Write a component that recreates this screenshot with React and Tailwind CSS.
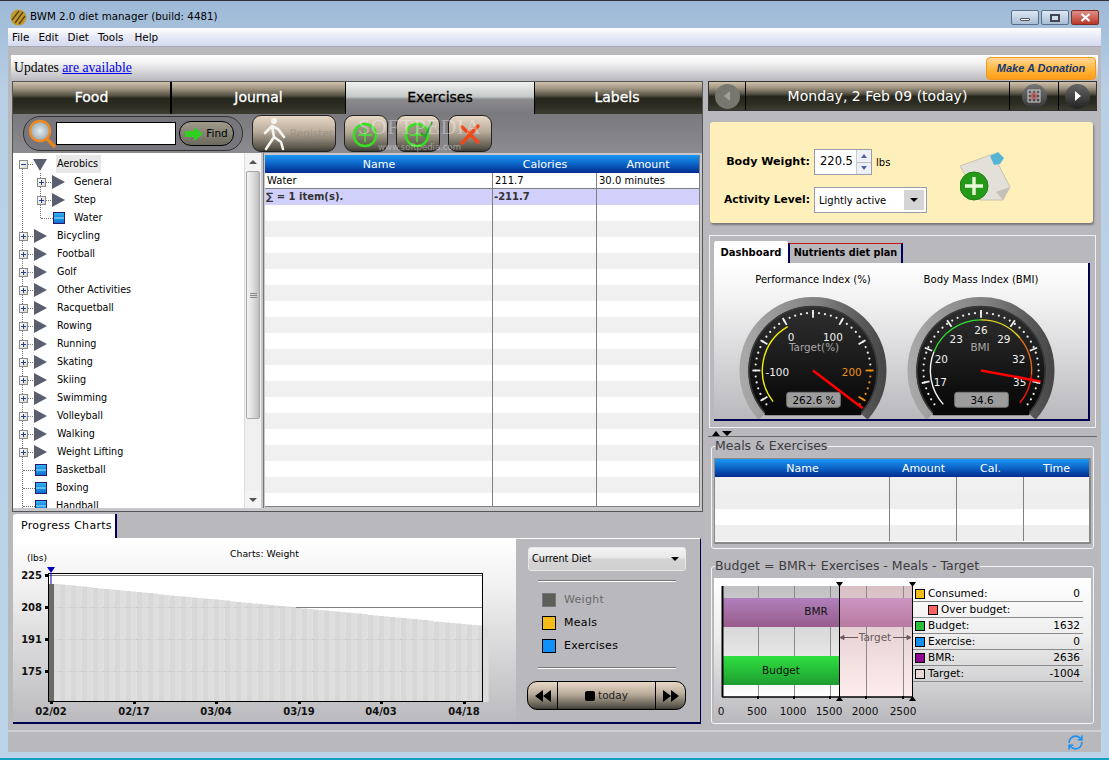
import React from 'react';
import { RefreshCw } from 'lucide-react';

const glossBar = 'bg-[linear-gradient(180deg,#d0c2ac_0%,#a89c88_18%,#5f5a4c_40%,#25261c_52%,#2c2c22_75%,#3e3d32_100%)]';
const blueHead = 'bg-[linear-gradient(180deg,#1a96f0_0%,#0f6fd0_40%,#002a90_100%)]';
const tanBtn = 'bg-[linear-gradient(180deg,#e8d8c6_0%,#b8ab9a_45%,#5a574c_90%,#3e3c32_100%)]';

const TREE = [
  { label: 'Aerobics', kind: 'open' },
  { label: 'General', kind: 'childGroup' },
  { label: 'Step', kind: 'childGroup' },
  { label: 'Water', kind: 'childLeaf' },
  ...['Bicycling', 'Football', 'Golf', 'Other Activities', 'Racquetball', 'Rowing', 'Running', 'Skating', 'Skiing', 'Swimming', 'Volleyball', 'Walking', 'Weight Lifting'].map((label) => ({ label, kind: 'group' })),
  ...['Basketball', 'Boxing', 'Handball'].map((label) => ({ label, kind: 'leaf' })),
];

const Triangle = ({ down }) => (
  <svg width="14" height="14" viewBox="0 0 14 14" className="shrink-0">
    <polygon points={down ? '0,2 14,2 7,14' : '1,0 14,7 1,14'} fill="#5a5e6e" />
  </svg>
);

const PlusBox = ({ minus, className }) => (
  <span className={`relative block w-[9px] h-[9px] shrink-0 border border-[#8a8a8a] bg-[linear-gradient(135deg,#ffffff,#d8d8d0)] ${className}`}>
    <span className="absolute left-[1px] top-[3px] w-[5px] h-[1px] bg-[#23408c]" />
    {!minus && <span className="absolute left-[3px] top-[1px] w-[1px] h-[5px] bg-[#23408c]" />}
  </span>
);

const Dots = ({ className }) => <span className={`block shrink-0 border-t border-dotted border-[#777] ${className}`} />;

const LeafIcon = () => (
  <span className="block w-[12px] h-[12px] shrink-0 border border-[#2a1670] bg-[linear-gradient(180deg,#35b8f0_0%,#1a8fe0_40%,#a8e8fa_50%,#1a8fe0_60%,#1070d0_100%)]" />
);

const TreeRow = ({ label, kind }) => (
  <div className="h-[18px] flex items-center whitespace-nowrap">
    {kind === 'open' && (
      <>
        <PlusBox minus className="ml-[5px]" />
        <Dots className="w-[5px]" />
        <Triangle down />
        <span className="ml-[9px] px-[1px] h-[18px] w-[45px] leading-[18px] bg-[#e8e8e8]">{label}</span>
      </>
    )}
    {kind === 'group' && (
      <>
        <PlusBox className="ml-[5px]" />
        <Dots className="w-[5px]" />
        <Triangle />
        <span className="ml-[10px]">{label}</span>
      </>
    )}
    {kind === 'childGroup' && (
      <>
        <PlusBox className="ml-[23px]" />
        <Dots className="w-[5px]" />
        <Triangle />
        <span className="ml-[9px]">{label}</span>
      </>
    )}
    {kind === 'childLeaf' && (
      <>
        <Dots className="ml-[27px] w-[12px]" />
        <LeafIcon />
        <span className="ml-[9px]">{label}</span>
      </>
    )}
    {kind === 'leaf' && (
      <>
        <Dots className="ml-[9px] w-[12px]" />
        <LeafIcon />
        <span className="ml-[9px]">{label}</span>
      </>
    )}
  </div>
);

const Scrollbar = () => (
  <div className="w-[17px] shrink-0 flex flex-col bg-[#f0f0f0] border-l border-[#ddd]">
    <div className="h-[18px] flex items-center justify-center bg-[#f4f4f4]">
      <span className="w-0 h-0 border-x-[4px] border-x-transparent border-b-[4px] border-b-[#555]" />
    </div>
    <div className="h-[248px] mx-[1px] border border-[#a8a8a8] rounded-[2px] bg-[linear-gradient(90deg,#f4f4f4,#d8d8d8_60%,#bdbdbd)] flex flex-col items-center justify-center gap-[1px]">
      <span className="w-[7px] h-[1px] bg-[#888]" />
      <span className="w-[7px] h-[1px] bg-[#888]" />
      <span className="w-[7px] h-[1px] bg-[#888]" />
    </div>
    <div className="flex-1" />
    <div className="h-[17px] flex items-center justify-center bg-[#f4f4f4]">
      <span className="w-0 h-0 border-x-[4px] border-x-transparent border-t-[4px] border-t-[#555]" />
    </div>
  </div>
);

const GreenPlus = ({ check }) => (
  <svg width="30" height="30" viewBox="0 0 30 30">
    <circle cx="14" cy="16" r="11" fill="#4d5a3c" fillOpacity="0.35" stroke="#35e020" strokeWidth="2.4" />
    <path d="M14 9v14M7 16h14" stroke="#45e830" strokeWidth="1.4" />
    {check && <path d="M18 14l4 4 7-15" fill="none" stroke="#2fa030" strokeWidth="2" />}
  </svg>
);

const Runner = () => (
  <svg width="26" height="34" viewBox="0 0 26 34">
    <circle cx="13" cy="4" r="3" fill="#f4f4f0" />
    <path d="M11 9L4 16M11 9l6 3 6 8M11 9l2 11-8 12M13 20l7 5 2 7" fill="none" stroke="#f4f4f0" strokeWidth="2.6" strokeLinecap="round" strokeLinejoin="round" />
  </svg>
);

const ToolButton = ({ children, className }) => (
  <div className={`h-[37px] rounded-[9px] border border-[#222] flex items-center justify-center ${tanBtn} ${className}`}>
    {children}
  </div>
);

const Gauge = ({ id, cx = 80, cy = 75, config }) => {
  const pt = (r, deg) => {
    const a = (deg * Math.PI) / 180;
    return [cx + r * Math.cos(a), cy - r * Math.sin(a)];
  };
  const arc = (r, from, to) => {
    const [x1, y1] = pt(r, from);
    const [x2, y2] = pt(r, to);
    return `M${x1} ${y1}A${r} ${r} 0 ${from - to > 180 ? 1 : 0} 1 ${x2} ${y2}`;
  };
  const dots = [];
  for (let d = 216; d >= -36; d -= 6) dots.push(d);
  const [nx, ny] = [cx + config.needle[0], cy + config.needle[1]];
  return (
    <svg width="160" height="124" viewBox="0 0 160 124" className="block">
      <defs>
        <linearGradient id={`${id}-ring`} x1="0" y1="0" x2="1" y2="0">
          <stop offset="0" stopColor="#a8a8a8" />
          <stop offset="0.55" stopColor="#808080" />
          <stop offset="1" stopColor="#484848" />
        </linearGradient>
        <linearGradient id={`${id}-face`} x1="0" y1="0" x2="0" y2="1">
          <stop offset="0" stopColor="#303030" />
          <stop offset="0.7" stopColor="#0c0c0c" />
          <stop offset="1" stopColor="#000" />
        </linearGradient>
        <clipPath id={`${id}-clip`}>
          <rect x="0" y="0" width="160" height={cy + 45} />
        </clipPath>
      </defs>
      <circle cx={cx} cy={cy} r="66" fill={`url(#${id}-face)`} clipPath={`url(#${id}-clip)`} />
      <path d={arc(69.5, 222, -42)} fill="none" stroke={`url(#${id}-ring)`} strokeWidth="9" />
      <path d={arc(64.5, 221, -41)} fill="none" stroke="#3a3a3a" strokeWidth="1.5" />
      {dots.map((d) => {
        const [x, y] = pt(58, d);
        return <circle key={d} cx={x} cy={y} r="1.1" fill={config.dotColor ? config.dotColor(d) : '#eee'} />;
      })}
      {config.arcs.map(([from, to, color]) => (
        <path key={from} d={arc(51, from, to)} fill="none" stroke={color} strokeWidth="1.4" />
      ))}
      {config.ticks.map(([deg, color]) => {
        const [x1, y1] = pt(53, deg);
        const [x2, y2] = pt(61, deg);
        return <line key={deg} x1={x1} y1={y1} x2={x2} y2={y2} stroke={color || '#f2f2f2'} strokeWidth="1.8" />;
      })}
      {config.labels.map(([text, dx, dy, color]) => (
        <text key={text} x={cx + dx} y={cy + dy + 4} textAnchor="middle" fontSize="10.5" fill={color || '#f2f2f2'}>{text}</text>
      ))}
      <line x1={cx} y1={cy} x2={nx} y2={ny} stroke="#ff0000" strokeWidth="2.6" />
      <rect x={cx - 26.5} y={cy + 22} width="54" height="15" rx="2.5" fill="#9c9c9c" stroke="#7a7a7a" />
      <text x={cx + 1} y={cy + 34} textAnchor="middle" fontSize="10.5" fill="#000">{config.value}</text>
    </svg>
  );
};

const PERF = {
  value: '262.6 %',
  needle: [50, 38],
  ticks: [[210], [180], [150], [120], [90], [60], [30], [0, '#f09010'], [-30, '#f09010']],
  arcs: [[218, 120, '#f4f000']],
  dotColor: (d) => (d <= 0 ? '#f09010' : '#eee'),
  labels: [
    ['-100', -36, 2],
    ['0', -22, -34],
    ['100', 20, -34],
    ['Target(%)', 1, -24, '#a8a8a8'],
    ['200', 39, 2, '#f09010'],
  ],
};

const BMI = {
  value: '34.6',
  needle: [60, 11],
  ticks: [[192], [158], [124], [90], [56], [22], [-12]],
  arcs: [
    [222, 158, '#f4f4f4'],
    [158, 90, '#30e030'],
    [90, 40, '#e0d820'],
    [40, -5, '#e06818'],
    [-5, -40, '#f01808'],
  ],
  labels: [
    ['17', -41, 12],
    ['20', -40, -12],
    ['23', -25, -32],
    ['26', 0, -41],
    ['29', 23, -32],
    ['32', 38, -12],
    ['35', 39, 12],
    ['BMI', -1, -24, '#a8a8a8'],
  ],
};

const WeightChart = () => {
  const bars = [];
  for (let i = 0; i < 79; i++) {
    const x = 6 + i * 5.5;
    bars.push({ x, top: 11 + Math.round(i * 0.54 * 2) / 2 });
  }
  const yLabels = [['225', 2], ['208', 34], ['191', 66], ['175', 98]];
  const xLabels = [['02/02', 3], ['02/17', 86], ['03/04', 168], ['03/19', 251], ['04/03', 333], ['04/18', 416]];
  return (
    <svg width="490" height="150" viewBox="-28 -6 490 150" className="block overflow-visible">
      <rect x="0" y="0" width="435" height="129" fill="#fff" />
      {yLabels.map(([t, y]) => (
        <g key={t}>
          <line x1="0" x2="435" y1={y + 0.5} y2={y + 0.5} stroke="#808080" />
          <rect x="-3" y={y - 1} width="3" height="3" fill="#000" />
          <text x="-6" y={y + 4} textAnchor="end" fontSize="10" fontWeight="700" fill="#111">{t}</text>
        </g>
      ))}
      {bars.map(({ x, top }, i) => (
        <rect key={x} x={x} y={top} width="5.6" height={129 - top} fill={i % 2 ? '#d6d6d6' : '#dcdcdc'} fillOpacity="0.94" />
      ))}
      <rect x="1" y="11" width="5" height="118" fill="#6c6c68" />
      <rect x="0.5" y="0.5" width="434" height="128" fill="none" stroke="#000" strokeWidth="1" />
      <line x1="3" x2="3" y1="0" y2="11" stroke="#0000c0" />
      <polygon points="-1,-6 7,-6 3,0" fill="#0000c0" />
      {xLabels.map(([t, x]) => (
        <g key={t}>
          <rect x={x - 1} y="129" width="3" height="2" fill="#000" />
          <text x={x} y="142" textAnchor="middle" fontSize="10" fontWeight="700" fill="#111">{t}</text>
        </g>
      ))}
    </svg>
  );
};

const BudgetChart = () => {
  const grid = [44, 80, 116, 152, 189];
  const labels = [['0', 7], ['500', 43], ['1000', 79], ['1500', 115], ['2000', 151], ['2500', 189]];
  return (
    <svg width="199" height="140" viewBox="0 0 199 140" className="block shrink-0 overflow-visible">
      <defs>
        <linearGradient id="tgt" x1="0" y1="0" x2="0" y2="1">
          <stop offset="0" stopColor="#d8c0c4" />
          <stop offset="1" stopColor="#ffeeee" />
        </linearGradient>
        <linearGradient id="plotbg" x1="0" y1="0" x2="0" y2="1">
          <stop offset="0" stopColor="#c0c0c2" />
          <stop offset="1" stopColor="#ffffff" />
        </linearGradient>
        <linearGradient id="bmr" x1="0" y1="0" x2="0" y2="1">
          <stop offset="0" stopColor="#b080bc" />
          <stop offset="1" stopColor="#985c8c" />
        </linearGradient>
        <linearGradient id="bmr2" x1="0" y1="0" x2="0" y2="1">
          <stop offset="0" stopColor="#cc96c2" />
          <stop offset="1" stopColor="#b87aa0" />
        </linearGradient>
        <linearGradient id="bud" x1="0" y1="0" x2="0" y2="1">
          <stop offset="0" stopColor="#30e040" />
          <stop offset="1" stopColor="#1e9c30" />
        </linearGradient>
      </defs>
      <rect x="9" y="8" width="189" height="111" fill="url(#plotbg)" />
      <rect x="125" y="8" width="73" height="111" fill="url(#tgt)" />
      {grid.map((x) => <line key={x} x1={x + 0.5} x2={x + 0.5} y1="8" y2="119" stroke="#8a8a8a" />)}
      <rect x="9" y="20" width="116" height="29" fill="url(#bmr)" />
      <rect x="125" y="20" width="73" height="29" fill="url(#bmr2)" />
      <rect x="9" y="78" width="116" height="29" fill="url(#bud)" />
      <text x="102" y="37" textAnchor="middle" fontSize="10.5" fill="#111">BMR</text>
      <text x="67" y="96" textAnchor="middle" fontSize="10.5" fill="#111">Budget</text>
      <path d="M126 59.5h18M197 59.5h-18M126 59.5l4-2v4zM197 59.5l-4-2v4z" stroke="#6a5a5e" fill="#6a5a5e" />
      <text x="161" y="63" textAnchor="middle" fontSize="10.5" fill="#6a5a5e">Target</text>
      <line x1="8.5" x2="8.5" y1="8" y2="119" stroke="#000" strokeWidth="2" />
      <line x1="8" x2="198" y1="119" y2="119" stroke="#000" strokeWidth="1.5" />
      <line x1="125.5" x2="125.5" y1="8" y2="119" stroke="#000" />
      <line x1="198.5" x2="198.5" y1="8" y2="119" stroke="#000" />
      <polygon points="122,4 129,4 125.5,9" fill="#000" />
      <polygon points="195,4 202,4 198.5,9" fill="#000" />
      <polygon points="122,123 129,123 125.5,118" fill="#000" />
      <polygon points="195,123 202,123 198.5,118" fill="#000" />
      {grid.map((x) => <rect key={x} x={x - 1} y="118" width="2" height="3" fill="#000" />)}
      {labels.map(([t, x]) => <text key={t} x={x} y="137" textAnchor="middle" fontSize="10.5" fill="#111">{t}</text>)}
    </svg>
  );
};

const LEGEND = [
  { label: 'Consumed:', value: '0', color: '#f4bc18' },
  { label: 'Over budget:', value: '', color: '#ff6060', inset: true },
  { label: 'Budget:', value: '1632', color: '#28c038' },
  { label: 'Exercise:', value: '0', color: '#1090f0' },
  { label: 'BMR:', value: '2636', color: '#900090' },
  { label: 'Target:', value: '-1004', color: '#e8d8d8' },
];

const GroupBox = ({ title, className, children }) => (
  <div className={`relative mx-[3px] border border-[#f4f4f4] rounded-[3px] ${className}`}>
    <span className="absolute left-[3px] top-[-9px] bg-[#b9b8bd] pr-[1px] text-[12.5px] leading-[16px] font-medium text-[#3c3c40] whitespace-nowrap">{title}</span>
    {children}
  </div>
);

export default function App() {
  const stripes = Array.from({ length: 19 }, (_, i) => i);
  return (
    <div className="w-[1109px] h-[760px] overflow-hidden flex flex-col font-['DejaVu_Sans',sans-serif] text-[10px] text-black bg-[linear-gradient(180deg,#9db9d6_0%,#b9cfe6_12%,#bdd3ea_100%)] border-b-2 border-[#18a0c0]">
      {/* title bar */}
      <div className="h-[28px] shrink-0 flex items-center pl-[10px] pr-[10px] pt-[5px] border-t border-[#333]">
        <svg width="17" height="17" viewBox="0 0 17 17" className="shrink-0">
          <circle cx="8.5" cy="8.5" r="8" fill="#c09a30" />
          <path d="M2 11L9 2M5 14l8-11M9 15l6-8" stroke="#5a4010" strokeWidth="1.3" />
        </svg>
        <span className="ml-[3px] text-[10.3px] text-black">BWM 2.0 diet manager (build: 4481)</span>
        <div className="ml-auto flex gap-[2px] self-start mt-[4px]">
          <div className="w-[28px] h-[15px] rounded-[2px] border border-[#5a7088] bg-[linear-gradient(180deg,#dce8f4,#a8bed4)] flex items-end justify-center pb-[3px]">
            <span className="w-[10px] h-[3px] bg-white border border-[#556] rounded-[1px]" />
          </div>
          <div className="w-[28px] h-[15px] rounded-[2px] border border-[#5a7088] bg-[linear-gradient(180deg,#dce8f4,#a8bed4)] flex items-center justify-center">
            <span className="w-[10px] h-[8px] bg-[#cfdce8] border-2 border-[#445]" />
          </div>
          <div className="w-[28px] h-[15px] rounded-[2px] border border-[#7a3028] bg-[linear-gradient(180deg,#e09088,#b83828)] flex items-center justify-center">
            <svg width="11" height="9" viewBox="0 0 11 9"><path d="M1.5 1l8 7M9.5 1l-8 7" stroke="#fff" strokeWidth="2.2" /></svg>
          </div>
        </div>
      </div>

      <div className="mx-[8px] h-[724px] shrink-0 bg-[#b9b8bd] flex flex-col">
        {/* menu */}
        <div className="h-[19px] shrink-0 flex items-center gap-[9px] pl-[4px] pt-[2px] text-[10.4px] bg-[linear-gradient(180deg,#ffffff_0%,#e6e9f6_50%,#d4d9ee_100%)] border-b border-[#a8a8b8]">
          <span>File</span><span>Edit</span><span>Diet</span><span>Tools</span><span className="ml-[2px]">Help</span>
        </div>

        {/* updates strip */}
        <div className="mt-[8px] mx-[3px] h-[26px] shrink-0 flex items-center justify-between pl-[3px] pr-[2px] bg-[linear-gradient(180deg,#ffffff_0%,#f2f2f2_30%,#b9b8bd_100%)]">
          <span className="font-['Liberation_Serif',serif] text-[13.7px] pt-[1px]">
            Updates <span className="text-[#0000ee] underline">are available</span>
          </span>
          <div className="w-[110px] h-[23px] rounded-[4px] border border-[#f09820] bg-[linear-gradient(180deg,#ffd898_0%,#ffb840_50%,#ff9c18_100%)] flex items-center justify-center font-['Liberation_Sans',sans-serif] text-[11px] font-bold italic text-[#143878]">
            Make A Donation
          </div>
        </div>

        <div className="flex flex-1 min-h-0 pl-[4px]">
          {/* left column */}
          <div className="w-[691px] shrink-0 flex flex-col">
            <div className="h-[431px] shrink-0 flex flex-col border border-[#555] bg-[#88878c]">
              <div className="h-[32px] shrink-0 flex text-[14px] text-white [-webkit-text-stroke:0.3px]">
                <div className={`w-[159px] flex items-center justify-center border-r-2 border-black pb-[1px] ${glossBar}`}>Food</div>
                <div className={`w-[174px] flex items-center justify-center border-r border-black pb-[1px] ${glossBar}`}>Journal</div>
                <div className="w-[188px] flex items-center justify-center pb-[1px] text-black bg-[linear-gradient(180deg,#f0f2f0_0%,#c6cac8_45%,#8a8a8c_55%,#7a797e_100%)]">Exercises</div>
                <div className={`flex-1 flex items-center justify-center border-l border-black pb-[1px] pr-[3px] ${glossBar}`}>Labels</div>
              </div>

              <div className="relative h-[39px] shrink-0 flex items-center bg-[linear-gradient(180deg,#7a797e,#8c8b90)] pl-[10px]">
                <div className="w-[220px] h-[35px] rounded-[17px] border border-[#333] bg-[#77767c] flex items-center pl-[4px]">
                  <svg width="28" height="30" viewBox="0 0 28 30" className="shrink-0">
                    <defs>
                      <radialGradient id="lens"><stop offset="0" stopColor="#e4ecf0" /><stop offset="1" stopColor="#98a8b4" /></radialGradient>
                    </defs>
                    <line x1="18" y1="19" x2="27" y2="28" stroke="#e88420" strokeWidth="3.4" />
                    <circle cx="12" cy="12" r="10" fill="url(#lens)" stroke="#ee8820" strokeWidth="2.4" />
                  </svg>
                  <div className="w-[120px] h-[23px] bg-white border border-black" />
                  <div className="ml-[3px] w-[55px] h-[25px] rounded-[12px] border border-black flex items-center justify-center gap-[3px] text-[10.5px] bg-[linear-gradient(180deg,#a09a8c,#6c6a5e)]">
                    <svg width="18" height="14" viewBox="0 0 18 14"><polygon points="0,4 9,4 9,0 18,7 9,14 9,10 0,10" fill="#30d020" /></svg>
                    Find
                  </div>
                </div>
                <ToolButton className="ml-[9px] w-[84px] justify-start pl-[8px] gap-[3px]">
                  <Runner />
                  <span className="text-[10.5px] text-[#8a8478] opacity-50">Register</span>
                </ToolButton>
                <ToolButton className="ml-[8px] w-[44px]"><GreenPlus /></ToolButton>
                <ToolButton className="ml-[8px] w-[44px]"><GreenPlus check /></ToolButton>
                <ToolButton className="ml-[8px] w-[44px]">
                  <svg width="24" height="24" viewBox="0 0 24 24"><path d="M4 5l16 15M20 4L4 21" stroke="#f04818" strokeWidth="3.4" strokeLinecap="round" /></svg>
                </ToolButton>
                {/* watermark */}
                <span className="absolute left-[345px] top-[-4px] font-['Liberation_Serif',serif] text-[22px] tracking-[0.5px] text-white/35">SOFTPEDIA</span>
                <span className="absolute left-[365px] top-[27px] text-[8.5px] text-white/40">www.softpedia.com</span>
              </div>

              <div className="flex-1 min-h-0 flex pb-[3px] bg-[#c8c8cc]">
                <div className="w-[248px] shrink-0 flex bg-white overflow-hidden">
                  <div className="relative flex-1 pt-[2px] pl-[1px] text-[9.6px] overflow-hidden">
                    <span className="absolute left-[9px] top-[15px] h-[340px] border-l border-dotted border-[#777]" />
                    <span className="absolute left-[27px] top-[20px] h-[45px] border-l border-dotted border-[#777]" />
                    {TREE.map((row) => <TreeRow key={row.label} {...row} />)}
                  </div>
                  <Scrollbar />
                </div>
                <div className="w-[3px] shrink-0 border-r border-[#777]" />
                <div className="flex-1 min-w-0 mt-[2px] mb-[1px] mr-[2px] ml-[1px] border-r border-b border-[#808080] bg-white overflow-hidden flex flex-col">
                  <div className={`h-[18px] shrink-0 grid grid-cols-[228px_104px_1fr] text-[11px] text-white text-center leading-[19px] ${blueHead}`}>
                    <span>Name</span><span>Calories</span><span>Amount</span>
                  </div>
                  <div className="h-[16px] shrink-0 grid grid-cols-[228px_104px_1fr] text-[10px] leading-[16px] border-b border-[#808080]">
                    <span className="pl-[2px] border-r border-[#808080]">Water</span>
                    <span className="pl-[2px] border-r border-[#808080]">211.7</span>
                    <span className="pl-[2px]">30.0 minutes</span>
                  </div>
                  <div className="h-[16px] shrink-0 grid grid-cols-[228px_104px_1fr] font-bold text-[10px] leading-[16px] text-[#333] bg-[#d0d0fb]">
                    <span className="pl-[1px] border-r border-[#808080]">∑ = 1 item(s).</span>
                    <span className="pl-[1px] border-r border-[#808080]">-211.7</span>
                    <span />
                  </div>
                  {stripes.map((i) => (
                    <div key={i} className={`h-[16px] shrink-0 grid grid-cols-[228px_104px_1fr] ${i % 2 ? 'bg-[#f0f0f0]' : 'bg-white'}`}>
                      <span className="border-r border-[#808080]" />
                      <span className="border-r border-[#808080]" />
                      <span />
                    </div>
                  ))}
                </div>
              </div>
            </div>

            {/* progress charts */}
            <div className="mt-[2px] h-[24px] shrink-0 flex pl-[1px]">
              <div className="w-[104px] rounded-tl-[3px] bg-white border-r-2 border-[#000060] flex items-center pl-[8px] text-[11px] tracking-[0.3px]">Progress Charts</div>
            </div>
            <div className="h-[186px] shrink-0 flex ml-[1px] mr-[2px] border-t border-t-white border-b-2 border-r border-b-[#000050] border-r-[#000050] bg-[#b9b8bd]">
              <div className="relative w-[503px] shrink-0 bg-[linear-gradient(180deg,#ffffff_0%,#eeeeee_30%,#bbbabe_100%)]">
                <span className="absolute left-[217px] top-[8px] text-[9.3px]">Charts: Weight</span>
                <span className="absolute left-[14px] top-[13px] text-[9px]">(lbs)</span>
                <div className="absolute left-[7px] top-[28px]"><WeightChart /></div>
              </div>
              <div className="flex-1 flex flex-col pl-[12px] pt-[8px]">
                <div className="w-[158px] h-[24px] shrink-0 rounded-[3px] border border-[#e8e8e8] bg-[linear-gradient(180deg,#f4f4f4_0%,#e8e8e8_45%,#d4d4d4_50%,#d0d0d0_100%)] flex items-center justify-between pl-[3px] pr-[2px] text-[9.7px]">
                  Current Diet
                  <span className="mr-[4px] w-0 h-0 border-x-[4px] border-x-transparent border-t-[4px] border-t-black" />
                </div>
                <div className="ml-[10px] w-[138px] mt-[9px] h-[2px] shrink-0 bg-[#777] border-b border-white" />
                <div className="mt-[11px] ml-[14px] flex flex-col gap-[9px] text-[11px] leading-[14px] tracking-[0.3px]">
                  <div className="h-[14px] flex items-center gap-[8px] text-[#6a6a6a]"><span className="w-[14px] h-[14px] bg-[#5a5f58] border border-[#777]" />Weight</div>
                  <div className="h-[14px] flex items-center gap-[8px]"><span className="w-[14px] h-[14px] bg-[#f4bc18] border border-black" />Meals</div>
                  <div className="h-[14px] flex items-center gap-[8px]"><span className="w-[14px] h-[14px] bg-[#1090f8] border border-black" />Exercises</div>
                </div>
                <div className="ml-[10px] w-[138px] mt-[14px] h-[2px] shrink-0 bg-[#777] border-b border-white" />
                <div className={`mt-[12px] -ml-[1px] w-[159px] h-[29px] shrink-0 rounded-[10px] border border-black flex text-[10.5px] ${tanBtn}`}>
                  <div className="w-[30px] flex items-center justify-center border-r border-black">
                    <svg width="16" height="12" viewBox="0 0 16 12"><path d="M8 0v12L0 6zM16 0v12L8 6z" fill="#000" /></svg>
                  </div>
                  <div className="flex-1 flex items-center justify-center gap-[3px] text-[#222]">
                    <span className="w-[10px] h-[10px] rounded-[2px] bg-black" />today
                  </div>
                  <div className="w-[30px] flex items-center justify-center border-l border-black">
                    <svg width="16" height="12" viewBox="0 0 16 12"><path d="M0 0v12l8-6zM8 0v12l8-6z" fill="#000" /></svg>
                  </div>
                </div>
              </div>
            </div>
          </div>

          {/* right column */}
          <div className="w-[389px] shrink-0 ml-[5px] flex flex-col">
            <div className={`h-[30px] shrink-0 flex border border-[#333] items-center text-white ${glossBar}`}>
              <div className="w-[37px] h-full flex items-center justify-center border-r border-black">
                <span className="w-[25px] h-[25px] rounded-full bg-[#77766f] flex items-center justify-center">
                  <span className="w-0 h-0 border-y-[5px] border-y-transparent border-r-[6px] border-r-[#a0a09a]" />
                </span>
              </div>
              <div className="w-[263px] text-center text-[14px]">Monday, 2 Feb 09 (today)</div>
              <div className="w-[50px] h-full flex items-center justify-center border-x border-black">
                <span className="w-[25px] h-[25px] rounded-full bg-[linear-gradient(180deg,#777,#333)] flex items-center justify-center">
                  <svg width="14" height="14" viewBox="0 0 14 14"><path d="M1 1h12v12H1zM1 5h12M1 9h12M5 1v12M9 1v12" fill="none" stroke="#ccc" /><rect x="5" y="5" width="4" height="4" fill="none" stroke="#e03030" /></svg>
                </span>
              </div>
              <div className="flex-1 h-full flex items-center justify-center">
                <span className="w-[25px] h-[25px] rounded-full bg-[linear-gradient(180deg,#666,#222)] flex items-center justify-center">
                  <span className="w-0 h-0 border-y-[5px] border-y-transparent border-l-[6px] border-l-white" />
                </span>
              </div>
            </div>

            <div className="relative mt-[11px] ml-[2px] w-[383px] h-[101px] shrink-0 rounded-[3px] bg-[#fff0bb] shadow-[1px_2px_2px_#777] text-[12px]">
              <div className="absolute right-[283px] top-[32px] font-bold text-[11.1px]">Body Weight:</div>
              <div className="absolute right-[283px] top-[70px] font-bold text-[10.7px]">Activity Level:</div>
              <div className="absolute left-[104px] top-[27px] w-[58px] h-[26px] flex items-center border border-[#9a9aaa] bg-white text-[11.5px] pl-[5px]">
                220.5
                <div className="ml-auto w-[15px] h-full flex flex-col border-l border-[#ccc]">
                  <span className="flex-1 flex items-center justify-center bg-[#eef0f8] border-b border-[#bbb]"><span className="w-0 h-0 border-x-[3px] border-x-transparent border-b-[4px] border-b-[#5060a0]" /></span>
                  <span className="flex-1 flex items-center justify-center bg-[#eef0f8]"><span className="w-0 h-0 border-x-[3px] border-x-transparent border-t-[4px] border-t-[#5060a0]" /></span>
                </div>
              </div>
              <span className="absolute left-[166px] top-[33px] text-[10px]">lbs</span>
              <div className="absolute left-[104px] top-[65px] w-[113px] h-[26px] flex items-center border border-[#9a9aaa] bg-white text-[10px] pl-[4px] p-[2px]">
                Lightly active
                <span className="ml-auto w-[20px] h-full flex items-center justify-center bg-[#d4d4d4]">
                  <span className="w-0 h-0 border-x-[4px] border-x-transparent border-t-[4px] border-t-black" />
                </span>
              </div>
              <svg width="54" height="52" viewBox="0 0 54 52" className="absolute left-[250px] top-[30px]">
                <polygon points="0,14 33,2 50,35 43,48 20,48" fill="#e2e0d8" stroke="#c8c4b0" />
                <polygon points="50,35 43,48 36,40" fill="#c4c2b8" />
                <path d="M30 4l8-4 6 6-4 6-6 1z" fill="#58b4d4" />
                <circle cx="14" cy="34" r="14" fill="#249a18" stroke="#1c7c14" />
                <path d="M14 25v18M5 34h18" stroke="#e8f8d8" strokeWidth="3.4" />
              </svg>
            </div>

            {/* dashboard */}
            <div className="mt-[12px] mr-[1px] ml-[1px] h-[193px] shrink-0 border border-[#f0f0f0] pt-[5px] pl-[4px] pr-[5px] flex flex-col">
              <div className="h-[22px] shrink-0 flex items-end font-bold">
                <div className="w-[74px] h-[22px] rounded-t-[2px] bg-white flex items-center justify-center text-[10px]">Dashboard</div>
                <div className="w-[115px] h-[20px] border-t border-[#c01818] border-l-2 border-l-[#000060] border-r-2 border-r-[#000060] flex items-center justify-center text-[9.7px]">Nutrients diet plan</div>
              </div>
              <div className="h-[158px] shrink-0 border-r-2 border-b-2 border-[#000050] bg-[linear-gradient(180deg,#ffffff_0%,#f2f2f2_25%,#b9b8bd_100%)] overflow-hidden">
                <div className="flex h-full">
                  <div className="w-[168px] ml-[15px] flex flex-col items-center">
                    <div className="h-[33px] w-[160px] pt-[9px] text-center text-[10.1px]">Performance Index (%)</div>
                    <Gauge id="perf" config={PERF} />
                  </div>
                  <div className="w-[168px] flex flex-col items-center">
                    <div className="h-[33px] w-[160px] pt-[9px] text-center text-[10.1px]">Body Mass Index (BMI)</div>
                    <Gauge id="bmi" config={BMI} />
                  </div>
                </div>
              </div>
            </div>
            <div className="mt-[3px] h-[6px] shrink-0 flex items-start gap-[2px] pl-[4px] border-b border-[#666]">
              <span className="w-0 h-0 border-x-[4px] border-x-transparent border-b-[5px] border-b-black" />
              <span className="w-0 h-0 border-x-[5px] border-x-transparent border-t-[5px] border-t-black" />
            </div>

            {/* meals */}
            <GroupBox title="Meals & Exercises" className="mt-[9px] h-[103px] shrink-0 pt-[11px] px-[2px]">
              <div className="h-[86px] border border-[#888] border-r-2 border-b-2 bg-white flex flex-col overflow-hidden">
                <div className={`h-[18px] shrink-0 grid grid-cols-[175px_67px_67px_1fr] text-[11px] text-white text-center leading-[19px] ${blueHead}`}>
                  <span>Name</span><span>Amount</span><span>Cal.</span><span>Time</span>
                </div>
                {['bg-[#f0f0f0]', 'bg-[#eeeeee]', 'bg-white', 'bg-[#eeeeee]'].map((bg, i) => (
                  <div key={i} className={`h-[16px] shrink-0 grid grid-cols-[175px_67px_67px_1fr] ${bg}`}>
                    <span className="border-r border-[#808080]" />
                    <span className="border-r border-[#808080]" />
                    <span className="border-r border-[#808080]" />
                    <span />
                  </div>
                ))}
              </div>
            </GroupBox>

            {/* budget */}
            <GroupBox title="Budget = BMR+ Exercises - Meals - Target" className="mt-[17px] h-[158px] shrink-0 pt-[11px] px-[2px] pb-[3px]">
              <div className="h-[142px] flex bg-[linear-gradient(180deg,#ffffff_0%,#eeeeee_40%,#bbbabe_100%)] text-[10.5px]">
                <BudgetChart />
                <div className="w-[170px] shrink-0 mt-[8px] flex flex-col">
                  {LEGEND.map(({ label, value, color, inset }) => (
                    <div key={label} className={`h-[16px] shrink-0 flex items-center border-b border-[#8a8a8a] pr-[3px] ${inset ? 'pl-[15px]' : 'pl-[2px]'}`}>
                      <span className="w-[10px] h-[10px] shrink-0 border border-black mr-[3px]" style={{ background: color }} />
                      <span>{label}</span>
                      <span className="ml-auto">{value}</span>
                    </div>
                  ))}
                </div>
              </div>
            </GroupBox>
          </div>
        </div>

        {/* status bar */}
        <div className="h-[22px] shrink-0 mt-[7px] border-t-2 border-[#d0d0d4] flex items-center justify-end pr-[17px]">
          <RefreshCw size={17} className="text-[#1a90f0]" strokeWidth={2.2} />
        </div>
      </div>
    </div>
  );
}
